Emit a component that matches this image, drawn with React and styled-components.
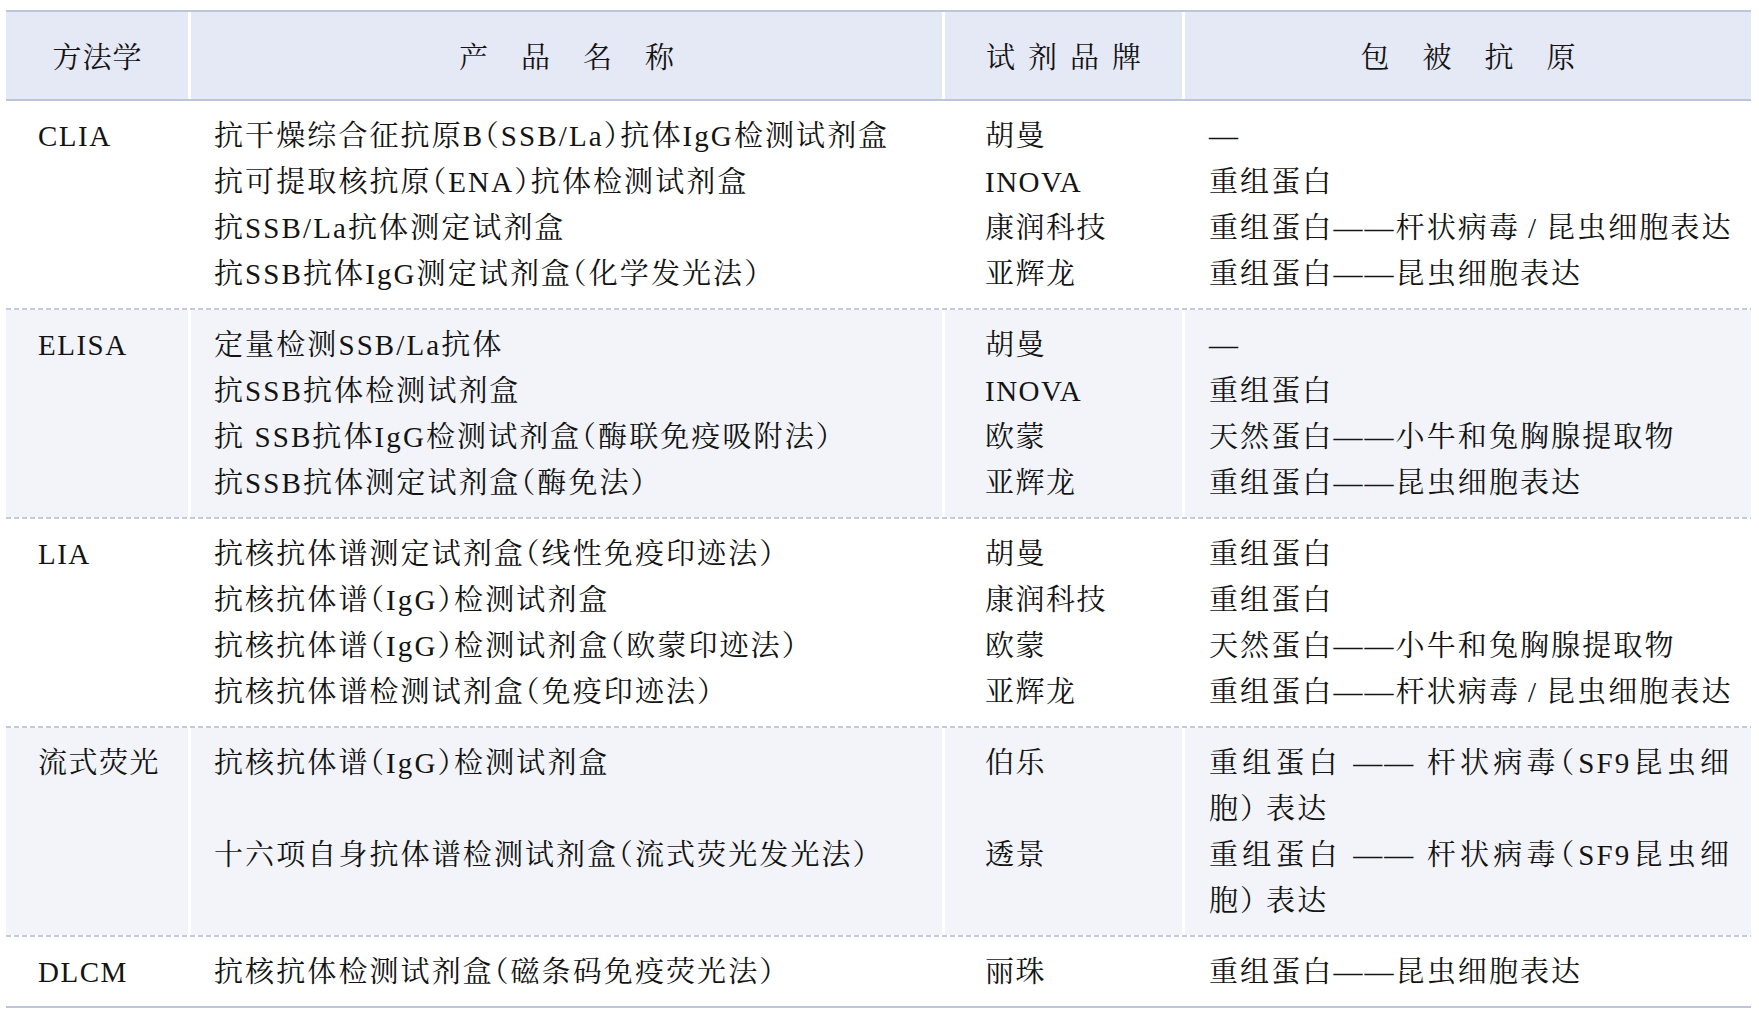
import React from "react";
import styled, { createGlobalStyle } from "styled-components";

const GlobalStyle = createGlobalStyle`
  html, body {
    margin: 0;
    padding: 0;
    background: #ffffff;
  }
  body {
    font-family: "Liberation Serif", "Noto Serif CJK SC", "Noto Sans CJK SC", serif;
    color: #141414;
  }
`;

const COLUMNS = "182px 751px 237px 1fr";

const Page = styled.div`
  padding: 10px 8px 0 6px;
  width: 1745px;
`;

const Table = styled.div`
  border-bottom: 2px solid #bcc5dc;
`;

const Header = styled.div`
  display: grid;
  grid-template-columns: ${COLUMNS};
  column-gap: 3px;
  background: #ffffff;
  border-top: 2px solid #bcc5dc;
  border-bottom: 2px solid #bcc5dc;
`;

const HeadCell = styled.div`
  background: #e5e8f5;
  height: 87px;
  display: flex;
  align-items: center;
  justify-content: center;
  font-size: 29px;
  letter-spacing: ${(p) => p.$spacing}px;
  padding-left: ${(p) => p.$spacing}px;
`;

const Dashed = styled.div`
  height: 2px;
  background-image: repeating-linear-gradient(
    to right,
    #c3cadf 0 5px,
    transparent 5px 8px
  );
`;

const Section = styled.div`
  display: grid;
  grid-template-columns: ${COLUMNS};
  column-gap: 3px;
  background: #ffffff;
`;

const Cell = styled.div`
  background: ${(p) => (p.$shaded ? "#f2f4fa" : "#ffffff")};
  font-size: 29px;
  line-height: 46px;
  letter-spacing: 2.1px;
  white-space: nowrap;
  font-feature-settings: "halt";
  padding-top: ${(p) => (p.$first ? 12 : 0)}px;
  padding-bottom: ${(p) => (p.$last ? 11 : 0)}px;
`;

const MethodCell = styled(Cell)`
  grid-row: 1 / span ${(p) => p.$rows};
  padding-left: 32px;
  padding-bottom: 11px;
  letter-spacing: 1.5px;
`;

const ProductCell = styled(Cell)`
  padding-left: 23px;
`;

const BrandCell = styled(Cell)`
  padding-left: 40px;
  letter-spacing: 1.5px;
`;

const AntigenCell = styled(Cell)`
  padding-left: 24px;
  padding-right: 20px;
`;

const JustifiedLine = styled.span`
  display: block;
  text-align: justify;
  text-align-last: justify;
`;

const sections = [
  {
    method: "CLIA",
    items: [
      ["抗干燥综合征抗原B（SSB/La）抗体IgG检测试剂盒", "胡曼", "—"],
      ["抗可提取核抗原（ENA）抗体检测试剂盒", "INOVA", "重组蛋白"],
      ["抗SSB/La抗体测定试剂盒", "康润科技", "重组蛋白——杆状病毒\u2009/\u2009昆虫细胞表达"],
      ["抗SSB抗体IgG测定试剂盒（化学发光法）", "亚辉龙", "重组蛋白——昆虫细胞表达"],
    ],
  },
  {
    method: "ELISA",
    shaded: true,
    items: [
      ["定量检测SSB/La抗体", "胡曼", "—"],
      ["抗SSB抗体检测试剂盒", "INOVA", "重组蛋白"],
      ["抗 SSB抗体IgG检测试剂盒（酶联免疫吸附法）", "欧蒙", "天然蛋白——小牛和兔胸腺提取物"],
      ["抗SSB抗体测定试剂盒（酶免法）", "亚辉龙", "重组蛋白——昆虫细胞表达"],
    ],
  },
  {
    method: "LIA",
    items: [
      ["抗核抗体谱测定试剂盒（线性免疫印迹法）", "胡曼", "重组蛋白"],
      ["抗核抗体谱（IgG）检测试剂盒", "康润科技", "重组蛋白"],
      ["抗核抗体谱（IgG）检测试剂盒（欧蒙印迹法）", "欧蒙", "天然蛋白——小牛和兔胸腺提取物"],
      ["抗核抗体谱检测试剂盒（免疫印迹法）", "亚辉龙", "重组蛋白——杆状病毒\u2009/\u2009昆虫细胞表达"],
    ],
  },
  {
    method: "流式荧光",
    shaded: true,
    items: [
      ["抗核抗体谱（IgG）检测试剂盒", "伯乐", ["重组蛋白 —— 杆状病毒（SF9昆虫细", "胞） 表达"]],
      ["十六项自身抗体谱检测试剂盒（流式荧光发光法）", "透景", ["重组蛋白 —— 杆状病毒（SF9昆虫细", "胞） 表达"]],
    ],
  },
  {
    method: "DLCM",
    items: [["抗核抗体检测试剂盒（磁条码免疫荧光法）", "丽珠", "重组蛋白——昆虫细胞表达"]],
  },
];

function Antigen({ value }) {
  if (Array.isArray(value)) {
    return (
      <>
        <JustifiedLine>{value[0]}</JustifiedLine>
        {value[1]}
      </>
    );
  }
  return value;
}

export default function App() {
  return (
    <Page>
      <GlobalStyle />
      <Table>
        <Header>
          <HeadCell $spacing={1}>方法学</HeadCell>
          <HeadCell $spacing={33}>产品名称</HeadCell>
          <HeadCell $spacing={13}>试剂品牌</HeadCell>
          <HeadCell $spacing={33}>包被抗原</HeadCell>
        </Header>
        {sections.map((section, si) => (
          <React.Fragment key={section.method}>
            {si > 0 && <Dashed />}
            <Section>
              <MethodCell
                $shaded={section.shaded}
                $rows={section.items.length}
                $first
              >
                {section.method}
              </MethodCell>
              {section.items.map(([product, brand, antigen], i) => {
                const first = i === 0;
                const last = i === section.items.length - 1;
                return (
                  <React.Fragment key={i}>
                    <ProductCell $shaded={section.shaded} $first={first} $last={last}>
                      {product}
                    </ProductCell>
                    <BrandCell $shaded={section.shaded} $first={first} $last={last}>
                      {brand}
                    </BrandCell>
                    <AntigenCell $shaded={section.shaded} $first={first} $last={last}>
                      <Antigen value={antigen} />
                    </AntigenCell>
                  </React.Fragment>
                );
              })}
            </Section>
          </React.Fragment>
        ))}
      </Table>
    </Page>
  );
}
